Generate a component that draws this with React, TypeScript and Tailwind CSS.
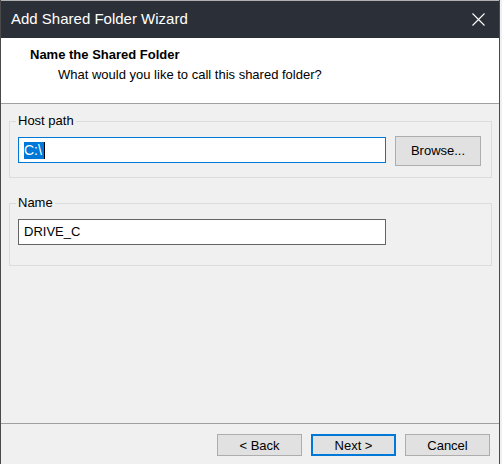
import React from 'react';

const font = "font-['Liberation_Sans',Arial,sans-serif]";

const WizardButton = ({ label, primary = false }: { label: string; primary?: boolean }) => (
  <button
    className={
      primary
        ? 'w-[85px] h-[22px] bg-[#e1e1e1] border-2 border-[#0078d7] text-[13px] text-black leading-none'
        : 'w-[85px] h-[22px] bg-[#e1e1e1] border border-[#adadad] text-[13px] text-black leading-none'
    }
  >
    {label}
  </button>
);

const App = () => {
  return (
    <div className={`w-[502px] h-[464px] bg-[#f0f0f0] overflow-hidden flex ${font}`}>
      <div className="w-[500px] h-full border-x border-[#4a4a4a] flex flex-col bg-[#f0f0f0]">
        {/* title bar */}
        <div className="h-[38px] border-t border-[#b0b0b0] bg-[#2b2f38] flex items-center justify-between pl-[10px] pr-[14px]">
          <span className="text-[15px] text-white">Add Shared Folder Wizard</span>
          <svg width="13" height="13" viewBox="0 0 13 13" className="mt-[-1px]">
            <path d="M0.5 0.5 L12.5 12.5 M12.5 0.5 L0.5 12.5" stroke="#ffffff" strokeWidth="1.1" />
          </svg>
        </div>

        {/* header */}
        <div className="h-[66px] bg-white border-b border-[#a0a0a0] pl-[29px] pt-[9px] text-[13px] leading-[16px] text-black">
          <div className="font-bold">Name the Shared Folder</div>
          <div className="ml-[28px] mt-[4px]">What would you like to call this shared folder?</div>
        </div>

        {/* body */}
        <div className="flex-1 pt-[9px] text-[13px] leading-[16px] text-black">
          <fieldset className="ml-[8px] mr-[7px] border border-[#dcdcdc] px-[8px] pt-[7px] pb-[11px]">
            <legend className="-ml-[2px] px-[2px]">Host path</legend>
            <div className="flex items-start gap-[9px]">
              <div className="mt-[1px] w-[368px] h-[26px] bg-white border border-[#0078d7] flex items-center pl-[5px]">
                <span className="bg-[#0078d7] text-white text-[14px] leading-[17px] pr-[2px]">C:\</span>
                <span className="w-[1px] h-[17px] bg-black" />
              </div>
              <button className="w-[86px] h-[30px] bg-[#e1e1e1] border border-[#adadad] text-[13px]">Browse...</button>
            </div>
          </fieldset>

          <fieldset className="mt-[17px] ml-[8px] mr-[7px] border border-[#dcdcdc] px-[8px] pt-[8px] pb-[20px]">
            <legend className="-ml-[2px] px-[2px]">Name</legend>
            <div className="w-[368px] h-[26px] bg-white border border-[#646464] flex items-center pl-[5px]">
              DRIVE_C
            </div>
          </fieldset>
        </div>

        {/* footer */}
        <div className="h-[41px] border-t border-[#a0a0a0] flex justify-end items-start gap-[9px] pt-[10px] pr-[9px]">
          <WizardButton label="< Back" />
          <WizardButton label="Next >" primary />
          <WizardButton label="Cancel" />
        </div>
      </div>
    </div>
  );
};

export default App;
